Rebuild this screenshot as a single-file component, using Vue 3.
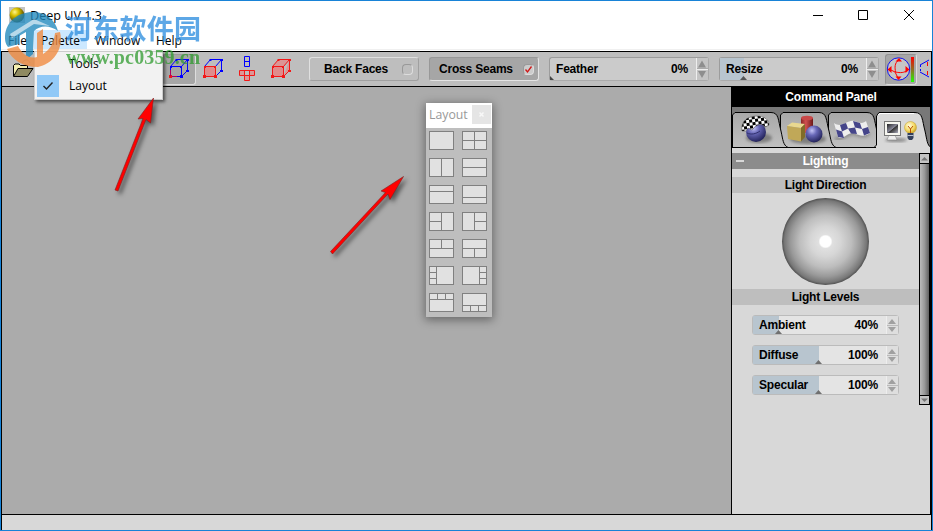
<script setup>
const menus = ['File', 'Palette', 'Window', 'Help']

// line segments inside a 25x19 thumbnail
const layouts = [
  '',
  'M12.5 0V19M0 9.5H25',
  'M12.5 0V19',
  'M0 9.5H25',
  'M0 6.5H25',
  'M0 12.5H25',
  'M12.5 0V19M0 9.5H12',
  'M12.5 0V19M12 9.5H25',
  'M0 9.5H25M12.5 0V9',
  'M0 9.5H25M12.5 9V19',
  'M7.5 0V19M0 6.5H7M0 12.5H7',
  'M17.5 0V19M18 6.5H25M18 12.5H25',
  'M0 6.5H25M8.5 0V6M16.5 0V6',
  'M0 12.5H25M8.5 13V19M16.5 13V19',
]

const levels = [
  { name: 'Ambient', value: 40, fill: 26 },
  { name: 'Diffuse', value: 100, fill: 66 },
  { name: 'Specular', value: 100, fill: 66 },
]

const tools = [
  { id: 'edges', front: 'none', back: '#00f', line: '#00f', on: true },
  { id: 'face', front: '#e08c8c', back: '#00f', line: '#f21818', on: false },
  { id: 'net' },
  { id: 'solid', front: '#e08c8c', back: '#f21818', line: '#f21818', on: false },
]
</script>

<template>
  <div class="app-window">
    <header class="titlebar">
      <svg class="app-icon" width="16" height="16">
        <defs>
          <radialGradient id="gold" cx=".35" cy=".3" r=".75">
            <stop offset="0" stop-color="#fff48c" />
            <stop offset=".35" stop-color="#d8c000" />
            <stop offset="1" stop-color="#3a3000" />
          </radialGradient>
        </defs>
        <rect width="16" height="16" fill="#c4c4c4" />
        <circle cx="8" cy="8" r="7.4" fill="url(#gold)" />
      </svg>
      <span class="title">Deep UV 1.3</span>
      <svg class="controls" width="104" height="14" fill="none" stroke="#000">
        <path d="M1 7.500H11M46.500 2.500H55.500V11.500H46.500ZM92 2L102 12M102 2L92 12" />
      </svg>
    </header>

    <nav class="menubar">
      <span v-for="menu in menus" :key="menu" class="menu" :class="'menu-' + menu.toLowerCase()">{{ menu }}</span>
    </nav>

    <div class="toolbar">
      <svg class="folder" width="24" height="20">
        <path d="M1.500 17V6.500L3 5H7L8.500 6.500H15.500V9" fill="#f4eeb0" stroke="#000" />
        <path d="M1.500 17.500L6 9.500H21L15.500 17.500Z" fill="#8f8a62" stroke="#000" />
        <path d="M10 4C12 0 17 0 18 4" fill="none" stroke="#999" />
      </svg>
      <span v-for="tool in tools" :key="tool.id" class="tool" :class="{ on: tool.on }">
        <svg v-if="tool.id === 'net'" width="22" height="26" fill="none">
          <path d="M8.500 .5H13.500V10.500H8.500ZM8.500 5.500H13.500" stroke="#00f" />
          <path d="M3.500 14.500H18.500V19.500H13.500V24.500H8.500V19.500H3.500ZM8.500 14.500V19.500H13.500V14.500" fill="#dc9696" stroke="#f21818" />
        </svg>
        <svg v-else width="22" height="22" fill="none">
          <path d="M2.500 8.500L8.500 1.500H19.500L13.500 8.500M19.500 1.500V12.500L13.500 18.500" :fill="tool.id === 'solid' ? '#dc9696' : 'none'" :stroke="tool.back" />
          <rect x="2.500" y="8.500" width="11" height="10" :fill="tool.front" :stroke="tool.line" />
          <path d="M2 8h2v2H2zM12 8h2v2h-2zM12 17h3v3h-3z" :fill="tool.line" />
          <path d="M7.500 1h2v2h-2zM18 1h3v2H18zM18 12h3v2H18z" :fill="tool.back" />
          <path d="M1 17h3v3H1z" fill="#f21818" />
          <path v-if="tool.on" d="M2.500 12V18M4 18.500H9" stroke="#b00060" />
        </svg>
      </span>
      <div class="toggle back-faces"><b>Back Faces</b><i class="box"></i></div>
      <div class="toggle cross-seams on">
        <b>Cross Seams</b>
        <i class="box"><svg width="9" height="9"><path d="M1.500 4.500L3.500 7L7.500 1.500" fill="none" stroke="#d01818" stroke-width="1.300" /></svg></i>
      </div>
      <div v-for="name in ['Feather', 'Resize']" :key="name" class="slider wide" :class="name.toLowerCase()">
        <div class="track">
          <div v-if="name === 'Resize'" class="fill"></div>
          <b class="name">{{ name }}</b><b>0%</b>
          <svg v-if="name === 'Resize'" class="thumb" width="7" height="4"><path d="M0 4L3.500 0L7 4Z" fill="#555" /></svg>
          <svg v-else class="thumb" width="7" height="4"><path d="M3 0L7 4H3Z" fill="#444" /></svg>
        </div>
        <svg class="spin" width="11" height="22">
          <path d="M1 9.500L5 2.500L9 9.500ZM1 13L5 20L9 13Z" fill="#8e8e8e" />
          <path d="M0 10.500H11" stroke="#aaa" /><path d="M0 11.500H11" stroke="#eee" />
        </svg>
      </div>
      <div class="rotate">
        <svg width="29" height="29">
          <defs>
            <linearGradient id="heat" x2="0" y2="1">
              <stop offset="0" stop-color="#f00" />
              <stop offset=".5" stop-color="#907020" />
              <stop offset="1" stop-color="#1eff00" />
            </linearGradient>
          </defs>
          <circle cx="12.500" cy="14" r="11.200" fill="#c6c6c6" stroke="#1010f0" />
          <path d="M13 5C8 8 9 13 9.500 17C14 18 19 18 21 15M3 14L9 17L12 23" fill="none" stroke="#f00" />
          <path d="M9.500 6.500L13 3L16 6.500ZM9.500 21.500L12.500 25L15.500 21.500ZM5.500 11L1.500 14.500L5.500 18ZM19.500 11L23.500 14.500L19.500 18Z" fill="#f00" />
          <rect x="25" y="2" width="3" height="25" fill="url(#heat)" />
        </svg>
      </div>
      <svg class="cut-icon" width="10" height="24" fill="none" stroke="#00f">
        <path d="M10 3L1 8M1 15L10 20" /><path d="M1.500 8V15" stroke-dasharray="2 2" />
        <path d="M8.500 5V9M8.500 14V18" stroke="#f00" />
      </svg>
    </div>

    <main class="body">
      <section class="workspace"></section>
      <aside class="panel">
        <h1>Command Panel</h1>
        <svg class="tabs" width="198" height="41">
          <defs>
            <radialGradient id="ball" cx=".38" cy=".3" r=".7">
              <stop offset="0" stop-color="#c4c4f6" />
              <stop offset=".4" stop-color="#6868b8" />
              <stop offset="1" stop-color="#24245c" />
            </radialGradient>
            <linearGradient id="can"><stop offset="0" stop-color="#8a2424" /><stop offset=".4" stop-color="#d05050" /><stop offset="1" stop-color="#6c1818" /></linearGradient>
            <linearGradient id="tab" x2="0" y2="1"><stop offset="0" stop-color="#a8a8a8" /><stop offset="1" stop-color="#c0c0c0" /></linearGradient>
            <pattern id="check" width="6" height="6" patternUnits="userSpaceOnUse" patternTransform="rotate(-8)">
              <rect width="6" height="6" fill="#fff" /><path d="M0 0h3v3H0zM3 3h3v3H3z" fill="#000" />
            </pattern>
            <radialGradient id="bulb" cx=".4" cy=".35" r=".7"><stop offset="0" stop-color="#fffce0" /><stop offset=".6" stop-color="#f4d860" /><stop offset="1" stop-color="#c09820" /></radialGradient>
            <linearGradient id="screen" x2="1" y2="1"><stop offset="0" stop-color="#222" /><stop offset=".5" stop-color="#889" /><stop offset=".55" stop-color="#333" /><stop offset="1" stop-color="#aab" /></linearGradient>
            <filter id="soft"><feGaussianBlur stdDeviation="1.500" /></filter>
          </defs>
          <rect width="198" height="41" fill="#787878" />
          <g v-for="x in [96, 48, 0]" :key="x" :transform="`translate(${x})`">
            <path d="M.5 40.500V8L3 5.500H39C47 5.500 46 13 49 24C51 33 51 38 56 40.500Z" fill="url(#tab)" stroke="#000" />
          </g>
          <path d="M144 41V9L147 5.500H183C191 5.500 190 13 193 24C195 33 195 38 199 41Z" fill="#d8d8d8" />
          <path d="M0 40.500H142L144.500 38V9L147 5.500H183C191 5.500 190 13 193 24C195 33 195 38 199 40.500" fill="none" stroke="#000" />
          <path d="M146 8L148 6.500H182" stroke="#fff" fill="none" />

          <ellipse cx="27" cy="31" rx="13" ry="5" fill="#555" opacity=".6" filter="url(#soft)" />
          <circle cx="24" cy="25" r="10" fill="url(#ball)" />
          <path d="M10 24C9 17 12 11 21 9.500C29 8 37 11 37 18L33 20C31 16 24 17 20 23L16 21L14 24Z" fill="url(#check)" stroke="#444" stroke-width=".5" />
          <path d="M15 26C19 28 24 27 28 24" fill="none" stroke="#30306c" />

          <ellipse cx="76" cy="32" rx="18" ry="5" fill="#555" opacity=".6" filter="url(#soft)" />
          <path d="M69 11V26H81V11Z" fill="url(#can)" /><ellipse cx="75" cy="11" rx="6" ry="2.300" fill="#c84848" />
          <path d="M55 19L60 15.500L73 17L69 21Z" fill="#e8d890" />
          <path d="M55 19L69 21V34.500L56 32Z" fill="#c0a858" /><path d="M69 21L73 17V30L69 34.500Z" fill="#806c28" />
          <circle cx="82" cy="27" r="8.500" fill="url(#ball)" />

          <path d="M103 31C110 35 116 23 124 27C129 29 134 29 137 26" fill="none" stroke="#666" stroke-width="4" opacity=".5" filter="url(#soft)" />
          <path d="M102 16C110 22 116 12 122 14C129 17 132 16 134 14L138 26C132 31 127 28 121 26C115 26 110 34 106 30Z" fill="#eee" />
          <path d="M108 18L114 16L116 21.500L110 24.500ZM121 14L128 16L130 22L123 20.500ZM104 22.500L110 24.500L112 31L106 30ZM116 21.500L123 20.500L125 27L119 26.500ZM130 22L136 20L138 26L132 28.500Z" fill="#45458a" />

          <ellipse cx="164" cy="33" rx="11" ry="2" fill="#555" opacity=".6" filter="url(#soft)" />
          <path d="M157 28H163L165 33H155Z" fill="#eee" stroke="#888" stroke-width=".6" />
          <rect x="152.500" y="14.500" width="16" height="14" fill="#f6f6f0" stroke="#777" />
          <rect x="155" y="17" width="11" height="9" fill="url(#screen)" />
          <circle cx="178.500" cy="20.500" r="6" fill="url(#bulb)" stroke="#c8a840" stroke-width=".6" />
          <path d="M176 19L178.500 22L181 19M178.500 22V26" stroke="#b85000" fill="none" />
          <path d="M175.500 26H181.500V31L180 33H177L175.500 31Z" fill="#34405c" /><path d="M175.500 28.500H181.500" stroke="#b8c0d0" />
        </svg>

        <div class="rollout">
          <div class="content">
            <h2><i></i>Lighting</h2>
            <h3>Light Direction</h3>
            <div class="sphere"></div>
            <h3>Light Levels</h3>
            <div class="levels">
              <div v-for="level in levels" :key="level.name" class="slider">
                <div class="track">
                  <div class="fill" :style="{ width: level.fill + 'px' }"></div>
                  <b class="name">{{ level.name }}</b><b>{{ level.value }}%</b>
                  <svg class="thumb" width="7" height="4" :style="{ left: level.fill - 4 + 'px' }"><path d="M0 4L3.500 0L7 4Z" fill="#707070" /></svg>
                </div>
                <svg class="spin" width="11" height="18">
                  <path d="M1 8L5 3L9 8ZM1 11L5 16L9 11Z" fill="#a0a0a0" />
                  <path d="M0 9.500H11" stroke="#bbb" />
                </svg>
              </div>
            </div>
          </div>
          <div class="scrollbar">
            <svg width="9" height="9"><path d="M1 6.500L4.500 3L8 6.500Z" fill="#777" /></svg>
            <div class="bar"></div>
            <svg width="9" height="8"><path d="M1 2.500L4.500 6L8 2.500Z" fill="#777" /></svg>
          </div>
        </div>
      </aside>
    </main>
    <footer class="status"></footer>

    <div class="palette-window">
      <div class="palette-title"><span>Layout</span><svg width="19" height="19"><rect width="19" height="19" fill="#e5e5e5" /><path d="M7.500 7.500L11.500 11.500M11.500 7.500L7.500 11.500" stroke="#f8f8f8" stroke-width="1.500" /></svg></div>
      <div class="thumbs">
        <svg v-for="(lines, i) in layouts" :key="i" width="25" height="19" stroke="#808080">
          <rect x=".5" y=".5" width="24" height="18" fill="#e1e1e1" />
          <path :d="lines" />
        </svg>
      </div>
    </div>

    <div class="dropdown">
      <div class="item"><i></i><span>Tools</span></div>
      <div class="item">
        <i class="checked"><svg width="12" height="10"><path d="M1.500 5L4.500 8L10.500 1.500" fill="none" stroke="#222" stroke-width="1.400" /></svg></i>
        <span>Layout</span>
      </div>
    </div>

    <svg class="overlay" width="933" height="531">
      <g class="arrow" fill="#f00" stroke="#7c2020" stroke-width=".6">
        <path d="M153.500 98L150.500 123L146 119.500L118 191L115 190L143 118.500L138 119Z" />
        <path d="M403.500 176.500L390 199.500L388 194L332.500 254L330.500 251.500L385.500 192.500L381 191Z" />
      </g>
      <g class="mark">
        <path d="M5 36C6 20 20 11 35 12C47 13 55 20 58 31C50 25 40 25 34 31L33 54L26 60V32L19 36V44L8 47C5 43 5 40 5 36Z" fill="#2088bd" />
        <path d="M7 49L18 46C23 55 29 59 37 57V33L43 29V54C50 50 54 42 55 33L60 32C64 48 54 64 38 67C23 67 12 60 7 49Z" fill="#f18a3e" />
        <path d="M10 34L34 19L50 26L34 24L12 38Z" fill="#fff" opacity=".6" />
      </g>
      <text class="cn" x="65" y="38.500" textLength="136">河东软件园</text>
      <text class="url" x="66" y="64" textLength="134">www.pc0359.cn</text>
    </svg>
  </div>
</template>

<style>
body {
  margin: 0;
  overflow: hidden;
}
</style>

<style scoped>
.app-window {
  box-sizing: border-box;
  position: relative;
  display: flex;
  flex-direction: column;
  width: 933px;
  height: 531px;
  border: 1px solid #1883d7;
  background: #fff;
  font: 12px "Open Sans", "Noto Sans", sans-serif;
  color: #000;
}

svg {
  display: block;
  flex: none;
}

b,
h1,
h2,
h3 {
  margin: 0;
  font: bold 12px "Liberation Sans", Arial, sans-serif;
  letter-spacing: -0.2px;
  white-space: nowrap;
}

.titlebar {
  display: flex;
  height: 29px;
  padding-left: 8px;
}

.app-icon {
  margin-top: 6px;
}

.title {
  margin: 6px 0 0 5px;
  line-height: 17px;
  font-size: 12.6px;
}

.controls {
  margin: 7px 16px 0 auto;
}

.menubar {
  display: flex;
  height: 19px;
  border-bottom: 1px solid #f0f0f0;
}

.menu {
  box-sizing: border-box;
  padding: 0 7px;
  height: 19px;
  line-height: 22px;
}

.menu-file {
  width: 33px;
}

.menu-palette {
  width: 53px;
  background: #cce8ff;
}

.menu-window {
  width: 61px;
  padding-left: 8px;
}

.menu-help {
  padding-left: 8px;
}

.toolbar {
  box-sizing: border-box;
  display: flex;
  align-items: center;
  height: 36px;
  margin-top: 1px;
  border: 1px solid #000;
  background: #bebebe;
  overflow: hidden;
}

.folder {
  margin: 0 126px 0 10px;
}

.tool {
  box-sizing: border-box;
  display: flex;
  align-items: center;
  justify-content: center;
  flex: none;
  width: 34px;
  height: 31px;
}

.tool.on {
  background: #a6a6a6;
  border: 1px solid #999;
  border-right-color: #ddd;
  border-bottom-color: #ddd;
  border-radius: 3px;
}

.toggle {
  box-sizing: border-box;
  display: flex;
  align-items: center;
  justify-content: space-between;
  flex: none;
  width: 110px;
  height: 24px;
  margin-left: 10px;
  padding: 0 5px 0 14px;
  border: 1px solid #e0e0e0;
  border-right-color: #a0a0a0;
  border-bottom-color: #a0a0a0;
  border-radius: 3px;
}

.toggle.on {
  padding: 0 4px 0 9px;
  background: #a6a6a6;
  border-color: #989898 #e4e4e4 #e4e4e4 #989898;
}

.toggle.back-faces {
  margin-left: 11px;
}

.box {
  width: 9px;
  height: 9px;
  border: 1px solid;
  border-color: #999 #ddd #ddd #999;
  border-radius: 4px;
}

.on .box {
  background: #ccc;
}

.slider {
  box-sizing: border-box;
  display: flex;
  flex: none;
  width: 147px;
  height: 20px;
  border: 1px solid #bbb;
  border-radius: 3px;
  background: #e4e4e4;
}

.wide {
  width: 160px;
  height: 24px;
  margin-left: 10px;
  border-color: #9c9c9c #aaa #aaa #9c9c9c;
  background: #cbcbcb;
}

.track {
  position: relative;
  display: flex;
  flex: 1;
  align-items: center;
  justify-content: space-between;
  padding: 0 8px 0 6px;
}

.fill {
  position: absolute;
  top: 0;
  bottom: 0;
  left: 0;
  width: 24px;
  background: #b8c5cf;
}

.track b {
  position: relative;
}

.thumb {
  position: absolute;
  bottom: 0;
  left: -3px;
}

.resize .thumb {
  left: 20px;
}

.spin {
  border-left: 1px solid #eee;
  background: #c4c4c4;
}

.levels .spin {
  background: #dedede;
}

.rotate {
  box-sizing: border-box;
  width: 32px;
  height: 31px;
  margin-left: 6px;
  border: 1px solid #929292;
  border-right-color: #ddd;
  border-bottom-color: #ddd;
  border-radius: 3px;
  background: #a6a6a6;
  flex: none;
}

.cut-icon {
  margin-left: 2px;
}

.body {
  display: flex;
  flex: none;
  height: 427px;
  border-left: 1px solid #000;
  border-right: 2px solid #000;
  border-bottom: 1px solid #000;
}

.workspace {
  flex: 1;
  background: #ababab;
}

.panel {
  width: 198px;
  border-left: 1px solid #000;
  background: #d8d8d8;
}

h1 {
  height: 20px;
  line-height: 20px;
  background: #000;
  color: #fff;
  text-align: center;
}

.rollout {
  display: flex;
  height: 252px;
  margin-top: 5px;
}

.content {
  flex: 1;
}

h2 {
  position: relative;
  line-height: 16px;
  background: #8c8c8c;
  color: #fff;
  text-align: center;
}

h2 i {
  position: absolute;
  top: 7px;
  left: 4px;
  width: 8px;
  height: 2px;
  background: #d8d8d8;
}

h3 {
  line-height: 16px;
  margin-top: 8px;
  background: #bebebe;
  text-align: center;
}

.sphere {
  width: 87px;
  height: 87px;
  margin: 5px auto -4px;
  border-radius: 50%;
  background: radial-gradient(circle closest-side, #fff 0 5.5px, #e0e0e0 7px, #d6d6d6 15px, #bdbdbd 26px, #999 35px, #777 41px, #505050 43.5px);
}

.levels {
  display: flex;
  flex-direction: column;
  gap: 10px;
  margin: 10px 0 0 20px;
}

.scrollbar {
  box-sizing: border-box;
  display: flex;
  flex-direction: column;
  width: 11px;
  border: 1px solid #000;
  background: #c4c4c4;
}

.bar {
  flex: 1;
  border: solid #000;
  border-width: 1px 0;
  background: linear-gradient(90deg, #bbb, #999 50%, #606060);
}

.status {
  flex: 1;
  border-left: 1px solid #000;
  border-right: 1px solid #000;
  background: #d8d8d8;
}

.palette-window {
  position: absolute;
  top: 102px;
  left: 425px;
  width: 66px;
  height: 214px;
  background: #bebebe;
  box-shadow: 0 2px 9px 1px rgba(0, 0, 0, 0.4);
}

.palette-title {
  box-sizing: border-box;
  display: flex;
  justify-content: space-between;
  height: 25px;
  padding: 2px 1px 0 3px;
  background: #fff;
  color: #999;
  font-size: 12.3px;
  line-height: 20px;
}

.thumbs {
  display: grid;
  grid-template-columns: 25px 25px;
  gap: 8px;
  padding: 3px;
}

.dropdown {
  box-sizing: border-box;
  position: absolute;
  top: 50px;
  left: 33px;
  width: 129px;
  height: 49px;
  padding: 1px 2px;
  border: 1px solid #ccc;
  background: #f2f2f2;
  box-shadow: 2px 2px 3px rgba(0, 0, 0, 0.55);
}

.item {
  display: flex;
  align-items: center;
  gap: 10px;
  height: 22px;
}

.item span {
  padding-bottom: 2px;
}

.item i {
  display: flex;
  align-items: center;
  justify-content: center;
  width: 22px;
  height: 22px;
}

.item .checked {
  background: #91c9f7;
}

.overlay {
  position: absolute;
  top: -1px;
  left: -1px;
}

.arrow {
  filter: drop-shadow(3px 3px 2px rgba(0, 0, 0, 0.5));
}

.mark {
  opacity: 0.78;
}

.cn {
  font: bold 27px "Noto Sans CJK SC", sans-serif;
  fill: #3592e0;
  opacity: 0.8;
}

.url {
  font: bold 20px "Liberation Serif", serif;
  fill: #2e9b2e;
  opacity: 0.75;
}
</style>
